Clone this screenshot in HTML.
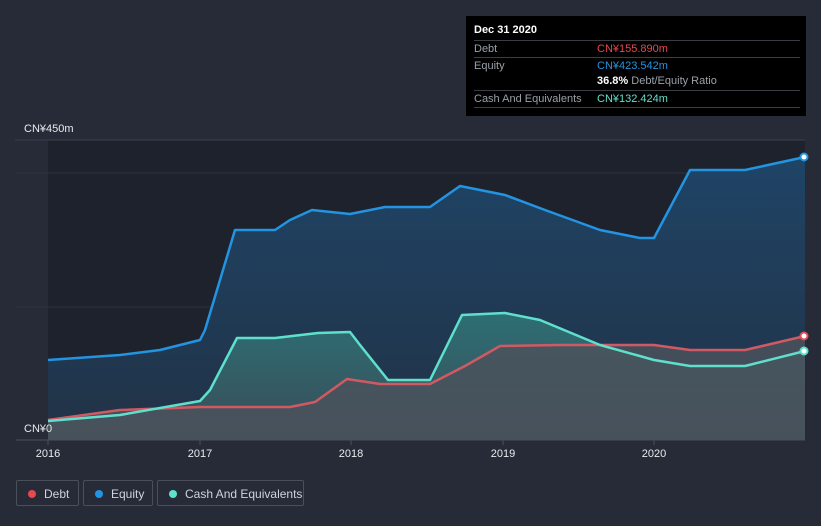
<!DOCTYPE html>
<html><head><style>
body{margin:0;width:821px;height:526px;background:#262b37;font-family:"Liberation Sans",sans-serif;overflow:hidden;position:relative}
.tt{position:absolute;left:466px;top:16px;width:340px;height:100px;background:#000;color:#fff;font-size:11px}
.row{position:absolute;left:8px;width:326px;border-top:1px solid #3a3d44;height:16px;line-height:16px;color:#9aa0a8}
.row span{position:absolute;left:123px}
.leg{position:absolute;top:480px;height:26px;border:1px solid #4a4f5a;border-radius:2px;color:#cfd3da;font-size:12px;line-height:26px;box-sizing:border-box}
.leg i{position:absolute;left:11px;top:9px;width:8px;height:8px;border-radius:50%}
.leg b{font-weight:normal;position:absolute;left:27px}
</style></head><body>
<svg width="821" height="526" style="position:absolute;left:0;top:0">
<defs>
<linearGradient id="ge" x1="0" y1="0" x2="0" y2="1"><stop offset="0" stop-color="#1f4466"/><stop offset="1" stop-color="#213246"/></linearGradient>
<linearGradient id="gc" x1="0" y1="0" x2="0" y2="1"><stop offset="0" stop-color="#2d6f74"/><stop offset="1" stop-color="#3a4c58"/></linearGradient>
</defs>
<rect x="48" y="140" width="757" height="300" fill="#1d222c"/>
<line x1="15" y1="140" x2="805" y2="140" stroke="#3b404b"/>
<line x1="15" y1="173" x2="805" y2="173" stroke="#2e333e"/>
<line x1="15" y1="307" x2="805" y2="307" stroke="#2e333e"/>
<polygon fill="url(#ge)" points="48,360 120,355 160,350 200,340 205,330 235,230 275,230 290,220 312,210 350,214 385,207 430,207 460,186 505,195 545,210 600,230 640,238 654,238 690,170 745,170 805,157 805,440 48,440"/>
<polygon fill="url(#gc)" points="48,421 120,415 200,401 210,390 237,338 275,338 318,333 350,332 360,345 388,380 430,380 462,315 505,313 540,320 600,345 654,360 690,366 745,366 805,351 805,440 48,440"/>
<polygon fill="#4a525c" opacity="0.85" points="48,420 120,410 200,407 290,407 315,402 347,379 380,384 430,384 465,366 500,346 560,345 654,345 690,350 745,350 805,336 805,440 48,440"/>
<polyline fill="none" stroke="#2394e2" stroke-width="2.5" stroke-linejoin="round" points="48,360 120,355 160,350 200,340 205,330 235,230 275,230 290,220 312,210 350,214 385,207 430,207 460,186 505,195 545,210 600,230 640,238 654,238 690,170 745,170 805,157"/>
<polyline fill="none" stroke="#d05a64" stroke-width="2.5" stroke-linejoin="round" points="48,420 120,410 200,407 290,407 315,402 347,379 380,384 430,384 465,366 500,346 560,345 654,345 690,350 745,350 805,336"/>
<polyline fill="none" stroke="#5fe0cc" stroke-width="2.5" stroke-linejoin="round" points="48,421 120,415 200,401 210,390 237,338 275,338 318,333 350,332 360,345 388,380 430,380 462,315 505,313 540,320 600,345 654,360 690,366 745,366 805,351"/>
<circle cx="804" cy="157" r="3.5" fill="#fff" stroke="#2394e2" stroke-width="2"/>
<circle cx="804" cy="336" r="3.5" fill="#fff" stroke="#e0505a" stroke-width="2"/>
<circle cx="804" cy="351" r="3.5" fill="#fff" stroke="#5fe0cc" stroke-width="2"/>
<line x1="16" y1="440" x2="805" y2="440" stroke="#4a4f5a"/>
<g stroke="#4a4f5a"><line x1="48" y1="440" x2="48" y2="445"/><line x1="200" y1="440" x2="200" y2="445"/><line x1="351" y1="440" x2="351" y2="445"/><line x1="503" y1="440" x2="503" y2="445"/><line x1="654" y1="440" x2="654" y2="445"/></g>
<g fill="#e8eaee" font-size="11" text-anchor="middle"><text x="48" y="457">2016</text><text x="200" y="457">2017</text><text x="351" y="457">2018</text><text x="503" y="457">2019</text><text x="654" y="457">2020</text></g>
<text x="24" y="132" fill="#e8eaee" font-size="11">CN¥450m</text>
<text x="24" y="432" fill="#e8eaee" font-size="11">CN¥0</text>
</svg>
<div class="tt">
<div style="position:absolute;left:8px;top:8px;font-weight:bold">Dec 31 2020</div>
<div class="row" style="top:24px">Debt<span style="color:#e8474f">CN¥155.890m</span></div>
<div class="row" style="top:41px">Equity<span style="color:#2394e2">CN¥423.542m</span></div>
<div class="row" style="top:57px;border:0"><span style="color:#9aa0a8"><b style="color:#fff">36.8%</b> Debt/Equity Ratio</span></div>
<div class="row" style="top:74px;border-bottom:1px solid #3a3d44">Cash And Equivalents<span style="color:#5fe0cc">CN¥132.424m</span></div>
</div>
<div class="leg" style="left:16px;width:63px"><i style="background:#e8474f"></i><b>Debt</b></div>
<div class="leg" style="left:83px;width:70px"><i style="background:#2394e2"></i><b>Equity</b></div>
<div class="leg" style="left:157px;width:147px"><i style="background:#5fe0cc"></i><b>Cash And Equivalents</b></div>
</body></html>
